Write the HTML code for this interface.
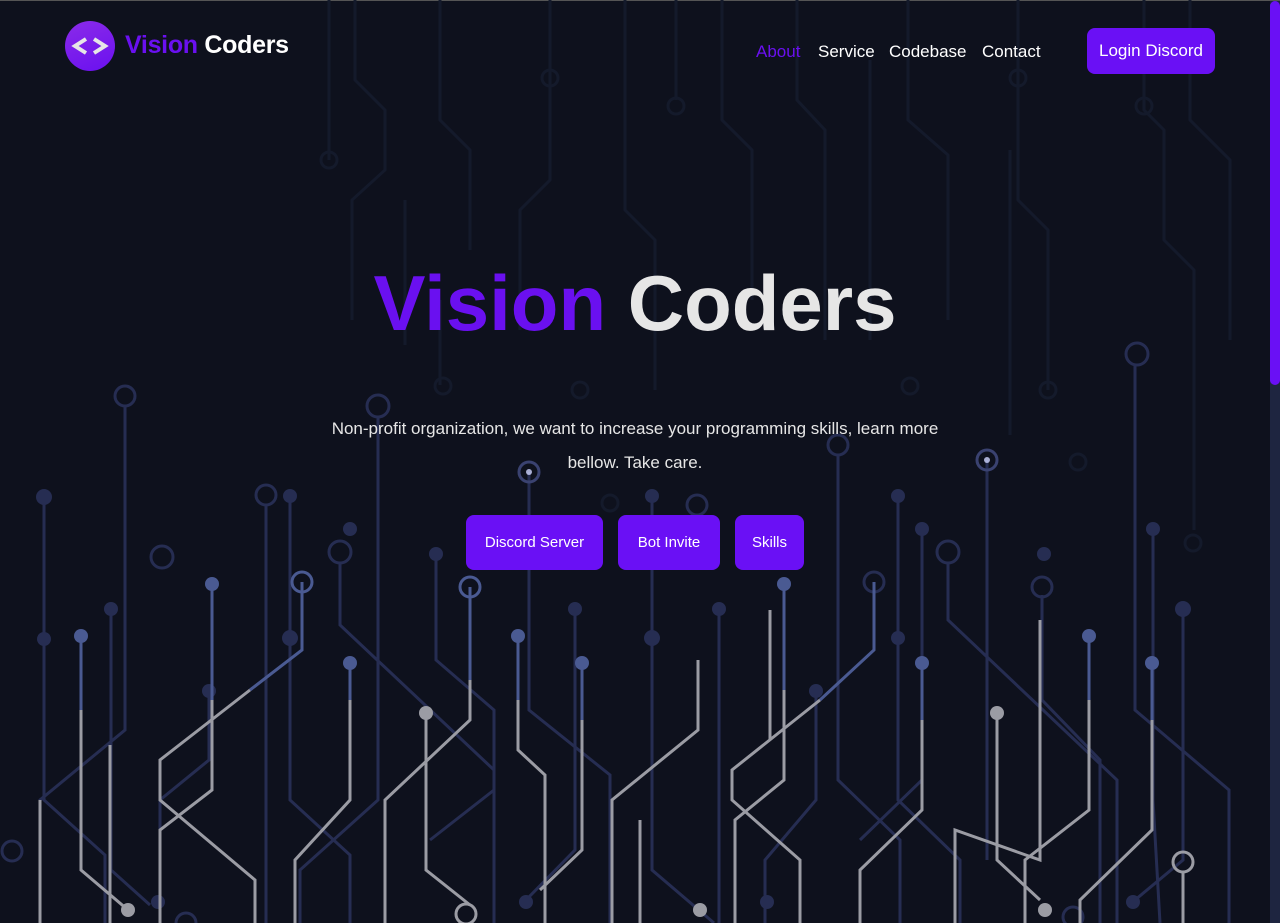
<!DOCTYPE html>
<html><head><meta charset="utf-8">
<style>
*{margin:0;padding:0;box-sizing:border-box}
html,body{width:1280px;height:923px;overflow:hidden;background:#0e111d;font-family:"Liberation Sans",sans-serif}
.top{position:absolute;left:0;top:0;width:1280px;height:1px;background:#555}
svg.bg{position:absolute;left:0;top:0}
.logo{position:absolute;left:65px;top:21px;width:50px;height:50px;border-radius:50%;background:linear-gradient(160deg,#8b2be8,#6a10f0)}
.brand{position:absolute;left:125px;top:31px;font-size:25px;font-weight:bold;color:#fff;letter-spacing:-0.3px}
.brand span{color:#6a10f0}
.nav{position:absolute;top:42px;font-size:17px;color:#fff}
.btn{position:absolute;background:#6a10f5;color:#fff;border-radius:8px;display:flex;align-items:center;justify-content:center}
h1{position:absolute;left:0;width:1270px;top:258px;text-align:center;font-size:78px;font-weight:bold;color:#e6e6e6;letter-spacing:0px}
h1 span{color:#6a10f0}
.p{position:absolute;left:0;width:1270px;text-align:center;color:#e6e6e6;font-size:17px}
.sb{position:absolute;left:1270px;top:1px;width:10px;height:922px;background:#1e2540}
.th{position:absolute;left:1270px;top:1px;width:10px;height:384px;background:#6a10f5;border-radius:5px}
</style></head><body>
<div class="top"></div>
<svg class="bg" width="1270" height="923" viewBox="0 0 1270 923" fill="none" stroke-width="3">
<g stroke="#141a2b" stroke-width="3">
<path d="M355 0V80L385 110V170L352 200V320"/><path d="M440 0V120L470 150V250"/><path d="M550 0V80M550 80V180L520 210V330"/>
<path d="M625 0V210L655 240V390"/><path d="M676 0V100"/><path d="M722 0V120L752 150V300"/><path d="M797 0V100L825 130V340"/>
<path d="M908 0V120L948 155V320"/><path d="M1018 0V80M1018 80V200L1048 230V390"/><path d="M1144 0V110L1164 130V240L1194 270V530"/>
<path d="M1190 0V120L1230 160V340"/><path d="M329 0V160"/><path d="M405 200V345"/><path d="M870 60V340"/><path d="M1010 150V435"/><path d="M440 300V385"/>
<circle cx="329" cy="160" r="8"/><circle cx="676" cy="106" r="8"/><circle cx="1144" cy="106" r="8"/><circle cx="1018" cy="78" r="8"/><circle cx="550" cy="78" r="8"/>
<circle cx="443" cy="386" r="8"/><circle cx="580" cy="390" r="8"/><circle cx="910" cy="386" r="8"/><circle cx="1048" cy="390" r="8"/><circle cx="1078" cy="462" r="8"/><circle cx="1193" cy="543" r="8"/><circle cx="610" cy="503" r="8"/>
</g>
<g stroke="#262d52">
<path d="M44 497V800L105 855V923"/><path d="M125 405V730L40 800V923"/><path d="M111 610V870L150 905"/><path d="M266 505V923"/>
<path d="M290 497V800L350 855V923"/><path d="M340 563V625L494 770V923"/><path d="M378 416V800L300 870V923"/><path d="M436 555V660L494 710V790L430 840"/>
<path d="M529 472V710L610 775V923"/><path d="M575 610V850L526 900"/><path d="M652 497V870L714 923"/><path d="M719 610V923"/>
<path d="M838 455V780L900 840V923"/><path d="M898 497V800L960 860V923"/><path d="M948 563V620L1117 780V923"/><path d="M987 460V860"/>
<path d="M1042 595V700L1100 760V923"/><path d="M1135 365V710L1229 790V923"/><path d="M1153 529V800L1160 923"/><path d="M1183 610V860L1135 900"/>
<path d="M816 690V800L765 860V923"/><path d="M209 690V760L160 800V900"/><path d="M922 529V780L860 840"/>
<circle cx="125" cy="396" r="10"/><circle cx="378" cy="406" r="11"/><circle cx="266" cy="495" r="10"/><circle cx="162" cy="557" r="11"/><circle cx="340" cy="552" r="11"/>
<circle cx="838" cy="445" r="10"/><circle cx="948" cy="552" r="11"/><circle cx="1137" cy="354" r="11"/><circle cx="1042" cy="587" r="10"/><circle cx="874" cy="582" r="10"/>
<circle cx="697" cy="505" r="10"/><circle cx="12" cy="851" r="10"/><circle cx="186" cy="923" r="10"/><circle cx="1073" cy="917" r="10"/>
</g>
<g fill="#262d52" stroke="none">
<circle cx="44" cy="639" r="7"/><circle cx="111" cy="609" r="7"/><circle cx="290" cy="496" r="7"/><circle cx="350" cy="529" r="7"/><circle cx="209" cy="691" r="7"/>
<circle cx="436" cy="554" r="7"/><circle cx="575" cy="609" r="7"/><circle cx="652" cy="496" r="7"/><circle cx="719" cy="609" r="7"/><circle cx="898" cy="496" r="7"/>
<circle cx="898" cy="638" r="7"/><circle cx="922" cy="529" r="7"/><circle cx="1044" cy="554" r="7"/><circle cx="1153" cy="529" r="7"/><circle cx="816" cy="691" r="7"/>
<circle cx="1183" cy="609" r="8"/><circle cx="44" cy="497" r="8"/><circle cx="290" cy="638" r="8"/><circle cx="652" cy="638" r="8"/><circle cx="158" cy="902" r="7"/><circle cx="526" cy="902" r="7"/><circle cx="1133" cy="902" r="7"/><circle cx="767" cy="902" r="7"/>
</g>
<g stroke="#4a5a92">
<path d="M81 636V720"/><path d="M212 584V700"/><path d="M350 663V720"/><path d="M518 636V700"/><path d="M582 663V720"/><path d="M784 584V690"/>
<path d="M922 663V720"/><path d="M1089 636V700"/><path d="M1152 663V720"/><path d="M470 587V680"/><path d="M302 582V650L250 690"/><path d="M874 582V650L820 700"/>
<circle cx="470" cy="587" r="10"/><circle cx="302" cy="582" r="10"/>
</g>
<g fill="#4a5a92" stroke="none">
<circle cx="81" cy="636" r="7"/><circle cx="212" cy="584" r="7"/><circle cx="350" cy="663" r="7"/><circle cx="518" cy="636" r="7"/><circle cx="582" cy="663" r="7"/>
<circle cx="784" cy="584" r="7"/><circle cx="922" cy="663" r="7"/><circle cx="1089" cy="636" r="7"/><circle cx="1152" cy="663" r="7"/>
</g>
<g stroke="#9b9ca4">
<path d="M81 710V870L128 910"/><path d="M212 700V790L160 830V923"/><path d="M250 690L160 760V800L255 880V923"/><path d="M350 700V800L295 860V923"/>
<path d="M426 713V870L470 905"/><path d="M470 680V720L385 800V923"/><path d="M518 700V750L545 775V923"/><path d="M582 720V850L540 890"/>
<path d="M698 660V730L612 800V923"/><path d="M784 690V780L735 820V923"/><path d="M820 700L732 770V800L800 860V923"/><path d="M770 610V740"/>
<path d="M922 720V810L860 870V923"/><path d="M997 713V860L1040 900"/><path d="M1089 700V810L1025 860V923"/><path d="M1152 720V830L1080 900V923"/>
<path d="M1040 620V860L955 830V923"/><path d="M640 820V923"/><path d="M1183 872V923"/><path d="M40 800V923"/><path d="M110 745V923"/>
<circle cx="1183" cy="862" r="10"/><circle cx="466" cy="914" r="10"/>
</g>
<g fill="#9b9ca4" stroke="none">
<circle cx="426" cy="713" r="7"/><circle cx="997" cy="713" r="7"/><circle cx="128" cy="910" r="7"/><circle cx="700" cy="910" r="7"/><circle cx="1045" cy="910" r="7"/>
</g>
<g fill="#cfd4ff" stroke="none" opacity=".8"><circle cx="529" cy="472" r="3"/><circle cx="987" cy="460" r="3"/></g>
<g stroke="#3a4270" stroke-width="3"><circle cx="529" cy="472" r="10"/><circle cx="987" cy="460" r="10"/></g>
</svg>
<div class="logo"><svg width="50" height="50" viewBox="0 0 50 50" fill="none" stroke="#e6e6e6" stroke-width="4"><path d="M21 18L10 25L21 32"/><path d="M29 18L40 25L29 32"/></svg></div>
<div class="brand"><span>Vision</span> Coders</div>
<div class="nav" style="left:756px;color:#6a10f0">About</div>
<div class="nav" style="left:818px">Service</div>
<div class="nav" style="left:889px">Codebase</div>
<div class="nav" style="left:982px">Contact</div>
<div class="btn" style="left:1087px;top:28px;width:128px;height:46px;font-size:17px">Login Discord</div>
<h1><span>Vision</span> Coders</h1>
<div class="p" style="top:419px">Non-profit organization, we want to increase your programming skills, learn more</div>
<div class="p" style="top:453px">bellow. Take care.</div>
<div class="btn" style="left:466px;top:515px;width:137px;height:55px;font-size:15px">Discord Server</div>
<div class="btn" style="left:618px;top:515px;width:102px;height:55px;font-size:15px">Bot Invite</div>
<div class="btn" style="left:735px;top:515px;width:69px;height:55px;font-size:15px">Skills</div>
<div class="sb"></div><div class="th"></div>
</body></html>
